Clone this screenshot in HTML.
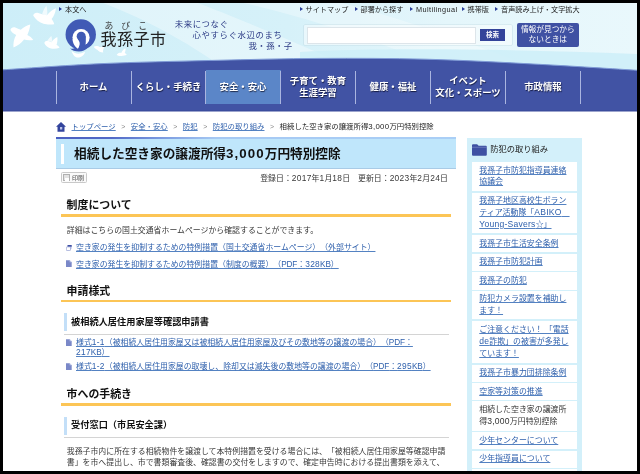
<!DOCTYPE html>
<html lang="ja">
<head>
<meta charset="utf-8">
<title>相続した空き家の譲渡所得3,000万円特別控除｜我孫子市</title>
<style>
html,body{margin:0;padding:0;}
body{width:640px;height:474px;background:#000;overflow:hidden;position:relative;
  font-family:"Liberation Sans","Noto Sans CJK JP",sans-serif;color:#222;text-spacing-trim:space-all;}
#page{position:absolute;left:3px;top:3px;width:634px;height:468px;background:#fff;overflow:hidden;}
#c{position:absolute;left:-3px;top:-3px;width:640px;height:474px;will-change:transform;}
.abs{position:absolute;white-space:nowrap;}
a{color:#2f60ac;text-decoration:underline;text-decoration-thickness:.6px;text-underline-offset:1.1px;text-decoration-color:#5482c2;}
/* header */
#hdbg{position:absolute;left:0;top:0;width:640px;height:112px;}
.util{font-size:7.15px;line-height:10px;color:#222;top:4.5px;}
.util i{display:inline-block;width:0;height:0;border-left:3px solid #2a3f9a;border-top:2px solid transparent;border-bottom:2px solid transparent;margin-right:3px;vertical-align:1px;}
.tag{font-size:8.4px;line-height:12px;color:#2b3a85;letter-spacing:.2px;}
/* nav */
.nav{position:absolute;top:70px;height:34px;width:75px;color:#fff;font-weight:bold;font-size:9.4px;line-height:12.5px;text-align:center;
  text-shadow:0.5px 0.5px 1px rgba(0,0,20,.7);display:flex;align-items:center;justify-content:center;}
.sep{position:absolute;top:70.5px;height:33px;width:1px;background:#aab5e0;}
/* main */
.bc{font-size:7.4px;line-height:10px;top:121.5px;color:#222;}
.bc .gt{color:#888;margin:0 5.5px;font-size:7px;}
h1{position:absolute;margin:0;left:55.8px;top:137px;width:400px;height:29px;border-top:2px solid transparent;background-clip:padding-box;border-bottom:.6px solid #a9cbe6;background:#bfe6fb;font-size:12.66px;line-height:29px;font-weight:bold;color:#111;}
h1 span{position:absolute;left:18.0px;top:-1.5px;white-space:nowrap;}
h1:before{content:"";position:absolute;left:4.8px;top:3.2px;width:3px;height:20.6px;background:#fff;}
h1:after{content:"";position:absolute;left:0;top:-2px;width:100%;height:2px;background:linear-gradient(to right,#4a5fc0 0%,#526ac7 14%,#7d9de1 27%,#a6c9f3 40%,#aacff6 100%);}
h1 b{font-size:13.3px;letter-spacing:1.1px;}
h1 span{position:absolute;left:18.3px;top:0;white-space:nowrap;}
h1:before{content:"";position:absolute;left:5px;top:5.3px;width:3px;height:20px;background:#fff;}
.h2{position:absolute;left:61px;width:389.5px;height:24px;font-size:10.9px;font-weight:bold;color:#111;line-height:14px;}
.h2:after{content:"";position:absolute;left:0;top:22.75px;width:100%;height:2.5px;background:#fcc556;}
.h2 span{position:absolute;left:5.6px;top:7.1px;white-space:nowrap;}
.h3{position:absolute;left:63.5px;width:385px;height:21px;font-size:9.2px;font-weight:bold;color:#111;line-height:12px;}
.h3:before{content:"";position:absolute;left:0;top:0;width:3px;height:18px;background:#c3dff8;}
.h3:after{content:"";position:absolute;left:0;top:20.8px;width:100%;height:.8px;background:#d4d4d4;}
.h3 span{position:absolute;left:7.6px;top:2.9px;white-space:nowrap;}
.p{font-size:7.9px;line-height:9.8px;color:#383838;}
.pp{line-height:11.25px;}
.l{font-size:106%;letter-spacing:.3px;}
.lc{font-size:104%;letter-spacing:-.1px;}
.ico{position:absolute;}
/* side */
#side{position:absolute;left:466.9px;top:137.8px;width:115.4px;height:340px;background:#d3f0fa;}
.sh{font-size:8.25px;line-height:12px;color:#222;left:23.3px;top:6.6px;}
.si{position:absolute;left:5.2px;width:105px;background:#fff;font-size:7.93px;line-height:11.8px;color:#333;display:flex;align-items:center;}
.si div{margin-left:7.2px;white-space:nowrap;position:relative;top:-.2px;}
.ls{font-size:108%;letter-spacing:.25px;}
</style>
</head>
<body>
<div id="page"><div id="c">

<!-- header background -->
<svg id="hdbg" viewBox="0 0 640 112">
  <defs>
    <linearGradient id="g1" x1="0" y1="0" x2="1" y2="0">
      <stop offset="0" stop-color="#cdeef8"/><stop offset=".45" stop-color="#d6f1f9"/><stop offset=".7" stop-color="#e4f6fb"/><stop offset="1" stop-color="#e9f8fc"/>
    </linearGradient>
  </defs>
  <rect x="0" y="0" width="640" height="80" fill="url(#g1)"/>
  <path d="M95 0 C150 20 190 45 215 62 L330 58 C290 40 230 15 190 0 Z" fill="#fff" opacity=".35"/>
  <path d="M230 0 C300 15 360 35 420 59 L520 62 C450 35 380 12 330 0 Z" fill="#fff" opacity=".3"/>
  <path d="M300 52 C380 47.500 500 49 637 54 L637 72 L300 72 Z" fill="#cdeef8" opacity=".85"/>
  <path d="M3.0 69.8 C19.2 68.8 65.0 65.3 100.0 63.7 C135.0 62.1 176.3 61.3 213.0 60.4 C249.7 59.5 284.5 58.6 320.0 58.4 C355.5 58.2 390.5 58.3 426.0 59.2 C461.5 60.1 497.8 62.1 533.0 64.0 C568.2 65.8 619.7 69.2 637.0 70.3 L637 111 L3 111 Z" fill="#4153a4"/>
  <path d="M3.0 69.8 C19.2 68.8 65.0 65.3 100.0 63.7 C135.0 62.1 176.3 61.3 213.0 60.4 C249.7 59.5 284.5 58.6 320.0 58.4 C355.5 58.2 390.5 58.3 426.0 59.2 C461.5 60.1 497.8 62.1 533.0 64.0 C568.2 65.8 619.7 69.2 637.0 70.3" fill="none" stroke="#7f9ad6" stroke-width="1"/>
  <rect x="3" y="110.3" width="634" height="1.2" fill="#3a4b9b"/>
</svg>

<!-- birds -->
<svg class="abs" style="left:0;top:0" width="140" height="70" viewBox="0 0 140 70">
  <g fill="#fff">
    <path d="M42 14.500 C43 11 44.500 8 46.400 5.800 C47.300 9 47.500 12.500 47.200 15.500 Z" opacity=".7"/>
    <path d="M33.200 15.400 C33.800 13.200 36 12.200 38.200 12.900 C40 13.400 41.500 14 42.700 14.500 L47 15.200 C49.500 12 52.500 9.500 55.900 8.200 C55.600 12.200 54 16 51.600 19 C52.800 20.500 53.800 22.300 54.300 24.200 C51 24.800 46.500 24.800 43.500 23.800 C39.500 22.500 35.500 19.500 33.200 15.400 Z"/>
    <path d="M10.400 30 C11 27.800 13.200 26.800 15.300 27.600 C17.200 28.300 19 29.200 20.800 29.800 C23.500 27.200 27 25.300 30.300 24.600 C29.800 28.300 28.800 31.800 27.300 35 C29.800 36.200 31.800 37.800 33.300 39.900 C30.500 40.600 27 40.500 24 39.600 C21.500 43 17.500 46 13.500 47.600 C13 43.500 14 38.500 16.200 35 C13.800 34 11.500 32.300 10.400 30 Z"/>
    <path d="M47.500 41 C48.300 39 49.800 37.300 51.400 36.100 C52 38 52.200 40 52 42 Z" opacity=".7"/>
    <path d="M44.300 43.100 C44.900 41.300 46.600 40.500 48.300 41 C49.500 41.400 50.600 41.900 51.600 42.300 C52.800 40 54.800 38.200 57.300 37.100 C57.700 39.800 57.400 42.500 56.500 44.800 C58 45.600 59 46.600 59.600 47.800 C57 48.900 53.500 49.100 51 48.500 C48 47.800 45.500 45.800 44.300 43.100 Z"/>
    <path d="M71.500 50.800 C74 53 77 54 80 53.600 C82 53.300 83.500 52.500 85 51.800 C84.500 55 81.500 57.600 78 57.600 C74.800 57.600 72.500 54.500 71.500 50.800 Z"/>
    <path d="M93.800 46.800 C95.500 45.600 98.500 46 100 47.300 C101.500 46.800 103 46.800 104.200 47.300 C103.200 49.300 102.800 51 103.200 52.600 C100.500 52.400 98.300 51.300 97.300 49.700 C95.800 49.200 94.500 48.200 93.800 46.800 Z"/>
    <path d="M116.600 54.900 C117.800 53 120 52.500 121.300 53 C122 51 123.500 49.200 125.500 48.300 C125.600 50.300 125.300 51.800 124.700 53.100 C125.700 53.400 126.400 54 126.800 54.600 C124 56.400 120 56.600 116.600 54.900 Z"/>
  </g>
</svg>

<!-- logo -->
<svg class="abs" style="left:62px;top:16px" width="38" height="38" viewBox="62 16 38 38">
  <circle cx="80.75" cy="34.4" r="15.2" fill="#405ab5"/>
  <path d="M70 48.2 C72.5 49.3 74.8 48.6 76.3 46.8 L88 47.5 C85.5 50.3 82.5 51.5 79 51.5 C75 51.5 72 50.5 70 48.2 Z" fill="#405ab5"/>
  <ellipse cx="81.05" cy="37.5" rx="8.6" ry="8.4" fill="#fff"/>
  <path d="M72.500 39 C72.800 43.500 75 47.300 78.300 48.900 C79.200 47 79.600 45 79.400 43 Z" fill="#fff"/>
  <circle cx="81.2" cy="36.3" r="4.5" fill="#405ab5"/>
  <path d="M77.9 39.4 C80.6 42 80 45.8 77.8 49.2 L84.8 49.2 C85.9 44.5 86 40 85.7 36.3 Z" fill="#405ab5"/>
</svg>
<div class="abs" style="left:104.4px;top:20.7px;font-size:8.8px;line-height:11px;letter-spacing:8.1px;color:#3a3a3a;">あびこ</div>
<div class="abs" style="left:100.6px;top:29px;font-size:16px;line-height:22px;letter-spacing:.45px;color:#222;">我孫子市</div>
<div class="abs util" style="left:59px;"><i></i>本文へ</div>

<div class="abs tag" style="left:174.7px;top:17.5px;letter-spacing:.6px;">未来につなぐ</div>
<div class="abs tag" style="left:192.6px;top:28.8px;letter-spacing:.62px;">心やすらぐ水辺のまち</div>
<div class="abs tag" style="left:248.5px;top:40.3px;letter-spacing:.45px;">我・孫・子</div>

<div class="abs util" style="left:299.5px;"><i></i>サイトマップ</div>
<div class="abs util" style="left:354.5px;"><i></i>部署から探す</div>
<div class="abs util" style="left:410px;"><i></i><span style="letter-spacing:.42px;font-size:7.3px">Multilingual</span></div>
<div class="abs util" style="left:461.5px;"><i></i>携帯版</div>
<div class="abs util" style="left:495px;"><i></i>音声読み上げ・文字拡大</div>

<!-- search -->
<div class="abs" style="left:304px;top:24.7px;width:208px;height:20.5px;background:rgba(255,255,255,.45);border-radius:1px;box-shadow:0 0 0 .6px rgba(190,215,225,.7);"></div>
<div class="abs" style="left:306.7px;top:27.3px;width:167px;height:14.6px;background:#fff;border:.6px solid #dde5ea;"></div>
<div class="abs" style="left:479.7px;top:28.8px;width:25.5px;height:12px;background:#33439a;color:#fff;font-size:6.5px;font-weight:bold;line-height:12px;text-align:center;">検索</div>
<div class="abs" style="left:517px;top:23.3px;width:61.7px;height:23.8px;background:#3f51a3;border-radius:2px;color:#fff;font-size:7.7px;line-height:10.4px;text-align:center;padding-top:1.6px;box-sizing:border-box;">情報が見つから<br>ないときは</div>

<!-- nav -->
<div class="abs" style="left:205.5px;top:70px;width:75px;height:33.8px;background:#5b86c8;"></div>
<div class="sep" style="left:56px"></div>
<div class="sep" style="left:130.7px"></div>
<div class="sep" style="left:205.3px"></div>
<div class="sep" style="left:280.3px"></div>
<div class="sep" style="left:355.3px"></div>
<div class="sep" style="left:430.3px"></div>
<div class="sep" style="left:505.3px"></div>
<div class="sep" style="left:580.3px"></div>
<div class="nav" style="left:56px">ホーム</div>
<div class="nav" style="left:131px">くらし・手続き</div>
<div class="nav" style="left:205.500px">安全・安心</div>
<div class="nav" style="left:280.500px">子育て・教育<br>生涯学習</div>
<div class="nav" style="left:355.500px">健康・福祉</div>
<div class="nav" style="left:430.500px">イベント<br>文化・スポーツ</div>
<div class="nav" style="left:505.500px">市政情報</div>

<!-- breadcrumb -->
<svg class="abs" style="left:55.900px;top:121.500px" width="10" height="10" viewBox="0 0 20 20">
  <path d="M10 0 L20 9.500 L17 9.500 L17 19.500 L3 19.500 L3 9.500 L0 9.500 Z" fill="#33449d"/>
  <rect x="8" y="10" width="4.500" height="5" fill="#b9c1e6"/>
</svg>
<div class="abs bc" style="left:71.500px;"><a href="#">トップページ</a><span class="gt">&gt;</span><a href="#">安全・安心</a><span class="gt">&gt;</span><a href="#">防犯</a><span class="gt">&gt;</span><a href="#">防犯の取り組み</a><span class="gt">&gt;</span>相続した空き家の譲渡所得<span class="l">3,000</span>万円特別控除</div>

<h1><span>相続した空き家の譲渡所得<b>3,000</b>万円特別控除</span></h1>

<div class="abs" style="left:61.1px;top:172.300px;width:25.800px;height:10.500px;box-sizing:border-box;border:.7px solid #c9c9c9;background:#fafafa;border-radius:1.500px;font-size:6px;line-height:9px;color:#444;"><span style="position:absolute;left:1.400px;top:.900px;width:6.800px;height:7.300px;border:.7px solid #b0b0b0;background:#e2e2e2;box-sizing:border-box;"></span><span style="position:absolute;left:2.500px;top:5px;width:4.600px;height:2.400px;background:#fff;"></span><span style="position:absolute;left:10px;top:.700px;">印刷</span></div>
<div class="abs p" style="right:192px;top:174.400px;">登録日：<span class="l">2017</span>年<span class="l">1</span>月<span class="l">18</span>日　更新日：<span class="l">2023</span>年<span class="l">2</span>月<span class="l">24</span>日</div>

<div class="h2" style="top:191.300px"><span>制度について</span></div>
<div class="abs p pp" style="left:66.800px;top:224.700px;">詳細はこちらの国土交通省ホームページから確認することができます。</div>
<svg class="ico" style="left:66.300px;top:244.600px" width="5.800" height="6" viewBox="0 0 12 12"><rect x="3" y="0" width="9" height="8" rx="1.500" fill="#c9d0ee"/><rect x="3" y="0" width="9" height="3.200" rx="1" fill="#3f51a3"/><rect x="0.700" y="3.700" width="8.600" height="7.600" rx="1.500" fill="#fff" stroke="#8b97d0" stroke-width="1.400"/></svg>
<div class="abs p" style="left:76px;top:243.200px;"><a href="#">空き家の発生を抑制するための特例措置（国土交通省ホームページ）（外部サイト）</a></div>
<svg class="ico" style="left:66.100px;top:260.40px" width="5.700" height="7.300" viewBox="0 0 10 12"><path d="M0 0 H6.500 L10 3.500 V12 H0 Z" fill="#7a88c8"/><path d="M6.500 0 V3.500 H10 Z" fill="#c8d0ee"/></svg>
<div class="abs p" style="left:76px;top:259.700px;"><a href="#">空き家の発生を抑制するための特例措置（制度の概要）（<span class="lc">PDF</span>：<span class="l">328</span><span class="lc">KB</span>）</a></div>

<div class="h2" style="top:276.800px"><span>申請様式</span></div>
<div class="h3" style="top:313.100px"><span>被相続人居住用家屋等確認申請書</span></div>
<svg class="ico" style="left:66.100px;top:339.40px" width="5.700" height="7.300" viewBox="0 0 10 12"><path d="M0 0 H6.500 L10 3.500 V12 H0 Z" fill="#7a88c8"/><path d="M6.500 0 V3.500 H10 Z" fill="#c8d0ee"/></svg>
<div class="abs p" style="left:76px;top:338.350px;"><a href="#">様式<span class="l">1-1</span>（被相続人居住用家屋又は被相続人居住用家屋及びその敷地等の譲渡の場合）（<span class="lc">PDF</span>：<br><span class="l">217</span><span class="lc">KB</span>）</a></div>
<svg class="ico" style="left:66.100px;top:363.20px" width="5.700" height="7.300" viewBox="0 0 10 12"><path d="M0 0 H6.500 L10 3.500 V12 H0 Z" fill="#7a88c8"/><path d="M6.500 0 V3.500 H10 Z" fill="#c8d0ee"/></svg>
<div class="abs p" style="left:76px;top:362.200px;"><a href="#">様式<span class="l">1-2</span>（被相続人居住用家屋の取壊し、除却又は滅失後の敷地等の譲渡の場合）（<span class="lc">PDF</span>：<span class="l">295</span><span class="lc">KB</span>）</a></div>

<div class="h2" style="top:380.400px"><span>市への手続き</span></div>
<div class="h3" style="top:416.600px"><span>受付窓口（市民安全課）</span></div>
<div class="abs p pp" style="left:66.800px;top:446px;">我孫子市内に所在する相続物件を譲渡して本特例措置を受ける場合には、「被相続人居住用家屋等確認申請<br>書」を市へ提出し、市で書類審査後、確認書の交付をしますので、確定申告時における提出書類を添えて、</div>

<!-- sidebar -->
<div id="side">
  <svg class="abs" style="left:5.600px;top:6.100px" width="14.800" height="12" viewBox="0 0 29 23"><path d="M0 2 Q0 0 2 0 H10 L13 3 H27 Q29 3 29 5 V21 Q29 23 27 23 H2 Q0 23 0 21 Z" fill="#3f51a3"/><path d="M0 6.200 H29" stroke="#8e9bd2" stroke-width="1"/></svg>
  <div class="abs sh">防犯の取り組み</div>
    <div class="si" style="top:24.00px;height:29.45px"><div><a href="#">我孫子市防犯指導員連絡<br>協議会</a></div></div>
  <div class="si" style="top:54.90px;height:40.70px"><div><a href="#">我孫子地区高校生ボラン<br>ティア活動隊「<span class="ls">ABIKO</span>　<br><span class="ls">Young-Savers</span>☆」</a></div></div>
  <div class="si" style="top:97.40px;height:17.10px"><div><a href="#">我孫子市生活安全条例</a></div></div>
  <div class="si" style="top:116.00px;height:17.20px"><div><a href="#">我孫子市防犯計画</a></div></div>
  <div class="si" style="top:134.70px;height:17.10px"><div><a href="#">我孫子の防犯</a></div></div>
  <div class="si" style="top:153.70px;height:27.90px"><div><a href="#">防犯カメラ設置を補助し<br>ます！</a></div></div>
  <div class="si" style="top:183.60px;height:41.90px"><div><a href="#">ご注意ください！ 「電話<br><span class="ls">de</span>詐欺」の被害が多発し<br>ています！</a></div></div>
  <div class="si" style="top:227.00px;height:17.10px"><div><a href="#">我孫子市暴力団排除条例</a></div></div>
  <div class="si" style="top:245.70px;height:16.50px"><div><a href="#">空家等対策の推進</a></div></div>
  <div class="si" style="top:263.50px;height:29.40px"><div>相続した空き家の譲渡所<br>得<span class="ls">3,000</span>万円特別控除</div></div>
  <div class="si" style="top:294.40px;height:17.20px"><div><a href="#">少年センターについて</a></div></div>
  <div class="si" style="top:313.10px;height:17.20px"><div><a href="#">少年指導員について</a></div></div>
  <div class="si" style="top:331.70px;height:17.50px"><div><a href="#">少年相談について</a></div></div>
</div>

</div></div>
</body>
</html>
